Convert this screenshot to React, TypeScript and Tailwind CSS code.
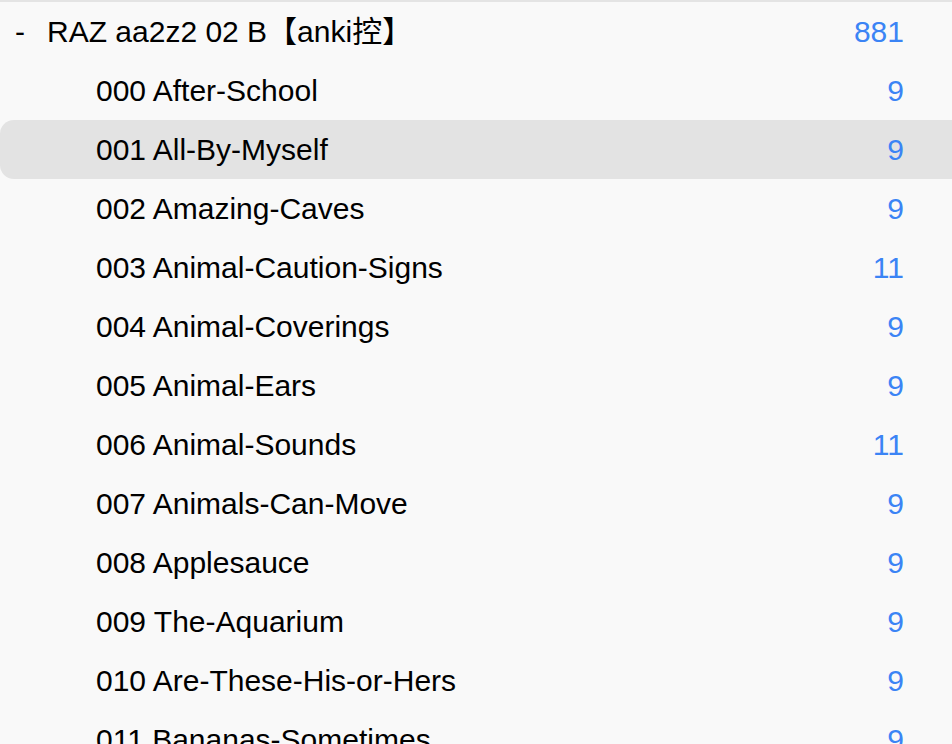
const decks = [
  { name: "000 After-School", count: 9 },
  { name: "001 All-By-Myself", count: 9, selected: true },
  { name: "002 Amazing-Caves", count: 9 },
  { name: "003 Animal-Caution-Signs", count: 11 },
  { name: "004 Animal-Coverings", count: 9 },
  { name: "005 Animal-Ears", count: 9 },
  { name: "006 Animal-Sounds", count: 11 },
  { name: "007 Animals-Can-Move", count: 9 },
  { name: "008 Applesauce", count: 9 },
  { name: "009 The-Aquarium", count: 9 },
  { name: "010 Are-These-His-or-Hers", count: 9 },
  { name: "011 Bananas-Sometimes", count: 9 },
];

const App = () => (
  <div
    className="h-[744px] w-[952px] overflow-hidden bg-[#f9f9f9] text-[30px] leading-none text-black"
    style={{ fontFamily: '"Liberation Sans", Arial, "Noto Sans CJK SC", sans-serif' }}
  >
    <div className="h-[2px] bg-[#e4e4e4]" />
    <div className="flex h-[59px] items-center pr-[48px]">
      <span className="w-[47px] pl-[15px]">-</span>
      <span className="flex-1">RAZ aa2z2 02 B【anki控】</span>
      <span className="text-[#3b84f5]">881</span>
    </div>
    {decks.map((d) => (
      <div
        key={d.name}
        className={`flex h-[59px] items-center pl-[96px] pr-[48px] ${d.selected ? "rounded-l-[14px] bg-[#e3e3e3]" : ""}`}
      >
        <span className="flex-1">{d.name}</span>
        <span className="text-[#3b84f5]">{d.count}</span>
      </div>
    ))}
  </div>
);

export default App;
